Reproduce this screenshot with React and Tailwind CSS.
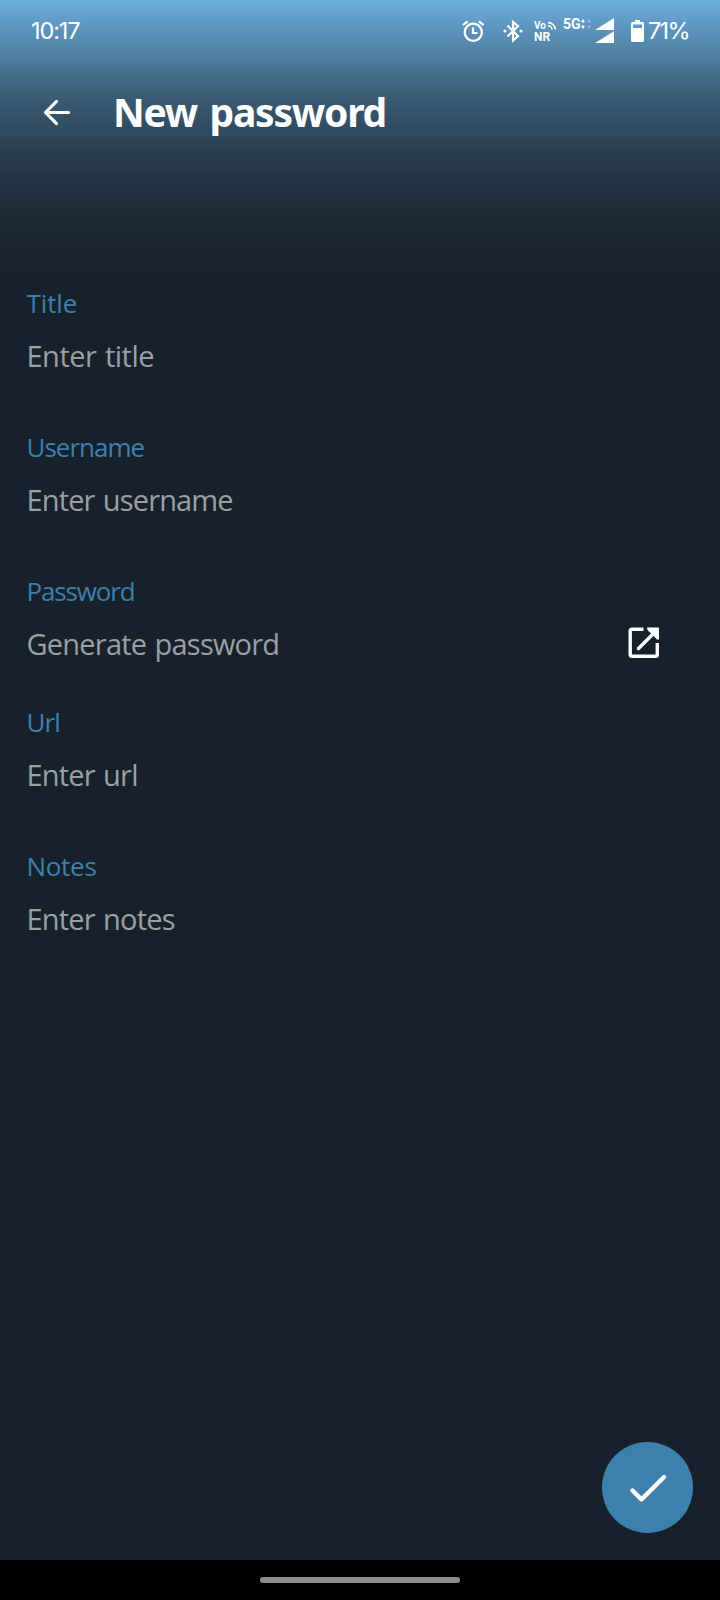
const fields = [
  { label: "Title", hint: "Enter title", labelCls: "tracking-[-0.1px]", hintCls: "tracking-[-0.5px]", pad: "mb-[54px]" },
  { label: "Username", hint: "Enter username", labelCls: "tracking-[-1px]", hintCls: "tracking-[-0.85px]", pad: "mb-[54px]" },
  { label: "Password", hint: "Generate password", labelCls: "tracking-[-1.15px]", hintCls: "tracking-[-0.78px]", pad: "mb-[41px]", action: true },
  { label: "Url", hint: "Enter url", labelCls: "tracking-[-0.9px]", hintCls: "tracking-[-0.8px]", pad: "mb-[54px]" },
  { label: "Notes", hint: "Enter notes", labelCls: "tracking-[-0.3px]", hintCls: "tracking-[-0.8px]", pad: "" },
];

function AlarmIcon() {
  return (
    <svg width="24" height="24" viewBox="0 0 24 24" fill="none" stroke="currentColor" strokeWidth="2.2">
      <circle cx="12.3" cy="13.3" r="8.600" />
      <path d="M12 8.500v5.500h4.500M2 6.200 6.700 2.300M22.600 6.200 17.900 2.300" />
    </svg>
  );
}

function BluetoothIcon() {
  return (
    <svg width="22" height="24" viewBox="0 0 22 24" fill="none" stroke="currentColor" strokeWidth="2.2">
      <path d="m5.500 6.500 10.500 10.700-5 4.300V2.800l5 4.300-10.500 10.400" />
      <circle cx="3" cy="12" r="1.6" fill="currentColor" stroke="none" />
      <circle cx="19" cy="12" r="1.6" fill="currentColor" stroke="none" />
    </svg>
  );
}

function StatusBar() {
  return (
    <header className="flex h-[62px] shrink-0 pl-[31px] text-white">
      <time className="mt-[16px] w-[430px] font-['Inter',sans-serif] text-[23.5px] leading-[30px] tracking-[-1.1px]">10:17</time>
      <div className="mt-[19px] w-[41px]"><AlarmIcon /></div>
      <div className="mt-[19px] w-[32px]"><BluetoothIcon /></div>
      <div className="mt-[21px] w-[29px] font-['Roboto',sans-serif] font-bold">
        <div className="flex h-[10px] items-start gap-px">
          <span className="text-[10px] leading-[10px]">Vo</span>
          <svg width="10" height="9" viewBox="0 0 10 9" fill="none" stroke="currentColor" strokeWidth="1.6">
            <path d="M1 1.6c4 0 7.3 3 7.3 7M1 4.800c2.200 0 4 1.600 4 3.800" />
          </svg>
        </div>
        <div className="mt-px text-[12px] leading-[10px]">NR</div>
      </div>
      <div className="mt-[17px] flex w-[32px] font-['Roboto',sans-serif] text-[14px] font-bold leading-[14px] tracking-[-0.1px]">
        <span>5G</span>
        <svg width="12" height="13" viewBox="0 0 12 13" fill="currentColor">
          <path d="M3 2 5 4.8H1zM3 12 1 9.2h4zM2.4 4h1.2v2H2.4zM2.4 8h1.2v2H2.4z" />
          <path d="M9 2 11 4.8H7zM9 12 7 9.2h4zM8.4 4h1.2v2H8.4zM8.4 8h1.2v2H8.4z" opacity=".35" />
        </svg>
      </div>
      <svg className="mt-[18px]" width="19" height="26" viewBox="0 0 19 26" fill="currentColor">
        <path d="M19 0v12H0zM19 13.3V25H0z" />
      </svg>
      <svg className="ml-[17px] mt-[20px]" width="13" height="22" viewBox="0 0 13 22" fill="currentColor">
        <path fillRule="evenodd" d="M4 0h5v2h2.5q1.5 0 1.5 1.5v17q0 1.5-1.5 1.5h-10Q0 22 0 20.500v-17Q0 2 1.500 2H4zM2 4.500V8h9V4.500z" />
      </svg>
      <span className="ml-[4px] mt-[16px] font-['Inter',sans-serif] text-[23.5px] leading-[30px] tracking-[-1.7px]">71%</span>
    </header>
  );
}

function TopBar() {
  return (
    <div className="flex h-[100px] shrink-0 items-center pl-[43px]">
      <button aria-label="Back" className="mt-[2px] text-white">
        <svg width="28" height="28" viewBox="0 0 28 28" fill="none" stroke="currentColor" strokeWidth="3.100" strokeLinecap="round" strokeLinejoin="round">
          <path d="M25.500 13.500H2.500M13.500 2.300 2.500 13.500l11 11.200" />
        </svg>
      </button>
      <h1 className="ml-[42px] font-['Noto_Sans',sans-serif] text-[39px] font-bold leading-[52px] tracking-[-1.2px] text-white [word-spacing:3.5px]">New password</h1>
    </div>
  );
}

function OpenIcon() {
  return (
    <svg width="32" height="32" viewBox="0 0 32 32" fill="none" stroke="currentColor" strokeWidth="3.400">
      <path d="M15.500 2.200H4Q2.200 2.200 2.200 4v23.500q0 1.800 1.800 1.800h23.500q1.800 0 1.800-1.800V16" />
      <path d="M10.500 21.500 27.500 4.500" strokeLinecap="round" />
      <path d="M19 .5h12v12h-2L19.500 3z" fill="currentColor" stroke="none" />
    </svg>
  );
}

function Field({ field }) {
  return (
    <div className={field.pad}>
      <div className={"text-[26px] leading-[34px] text-[#3d80ad] " + field.labelCls}>{field.label}</div>
      <div className="mt-[16px] flex h-[40px] items-center justify-between">
        <span className={"text-[29px] leading-[40px] text-[#9c9fa2] [word-spacing:1.5px] " + field.hintCls}>{field.hint}</span>
        {field.action && (
          <button aria-label="Generate password" className="-mt-[2px] mr-[60px] text-white"><OpenIcon /></button>
        )}
      </div>
    </div>
  );
}

export default function App() {
  return (
    <div className="flex h-[1600px] w-[720px] flex-col overflow-hidden bg-[#18212b] bg-[linear-gradient(to_bottom,#6aadde_0px,#5283a6_50px,#395a73_100px,#2a4153_150px,#1f2e3b_200px,#19242e_250px,#17212b_285px)]">
      <StatusBar />
      <TopBar />
      <main className="flex-1 pl-[26.5px] pt-[124px] font-['Open_Sans',sans-serif]">
        {fields.map((f) => <Field key={f.label} field={f} />)}
      </main>
      <div className="flex shrink-0 justify-end pb-[27px] pr-[27px]">
        <button aria-label="Save" className="flex h-[91px] w-[91px] items-center justify-center rounded-full bg-[#3d80ad] text-white">
          <svg width="38" height="30" viewBox="0 0 38 30" fill="none" stroke="currentColor" strokeWidth="4.400" strokeLinecap="round" strokeLinejoin="round">
            <path d="M3.500 17.500 12.500 26.500 35 4" />
          </svg>
        </button>
      </div>
      <footer className="flex h-[40px] shrink-0 items-center justify-center bg-black">
        <div className="h-[6px] w-[200px] rounded-full bg-[#8c8c8c]" />
      </footer>
    </div>
  );
}
